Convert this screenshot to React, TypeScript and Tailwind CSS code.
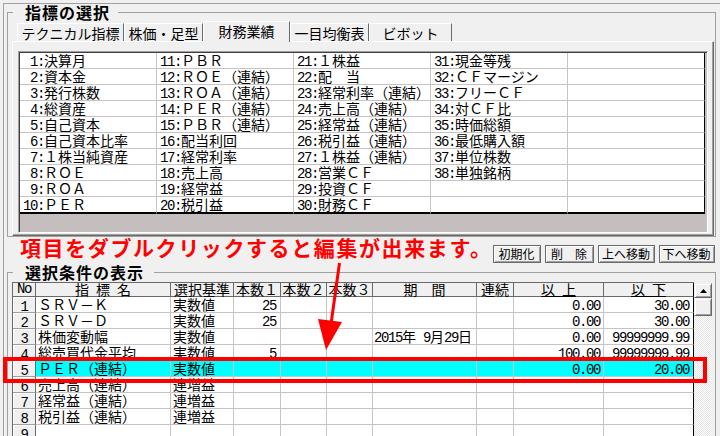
import React from "react";

const mono = "font-['Liberation_Mono',monospace] text-[14px] tracking-[-1.4px]";

const indicatorCols: string[][] = [
  ["決算月", "資本金", "発行株数", "総資産", "自己資本", "自己資本比率", "１株当純資産", "ＲＯＥ", "ＲＯＡ", "ＰＥＲ"],
  ["ＰＢＲ", "ＲＯＥ（連結）", "ＲＯＡ（連結）", "ＰＥＲ（連結）", "ＰＢＲ（連結）", "配当利回", "経常利率", "売上高", "経常益", "税引益"],
  ["１株益", "配　当", "経常利率（連結）", "売上高（連結）", "経常益（連結）", "税引益（連結）", "１株益（連結）", "営業ＣＦ", "投資ＣＦ", "財務ＣＦ"],
  ["現金等残", "ＣＦマージン", "フリーＣＦ", "対ＣＦ比", "時価総額", "最低購入額", "単位株数", "単独銘柄"],
  [],
];

type Cond = {
  no: number;
  name?: string;
  kind?: string;
  n1?: string;
  period?: boolean;
  lo?: string;
  hi?: string;
  sel?: boolean;
};

const conditions: Cond[] = [
  { no: 1, name: "ＳＲＶ－Ｋ", kind: "実数値", n1: "25", lo: "0.00", hi: "30.00" },
  { no: 2, name: "ＳＲＶ－Ｄ", kind: "実数値", n1: "25", lo: "0.00", hi: "30.00" },
  { no: 3, name: "株価変動幅", kind: "実数値", period: true, lo: "0.00", hi: "99999999.99" },
  { no: 4, name: "総売買代金平均", kind: "実数値", n1: "5", lo: "100.00", hi: "99999999.99" },
  { no: 5, name: "ＰＥＲ（連結）", kind: "実数値", lo: "0.00", hi: "20.00", sel: true },
  { no: 6, name: "売上高（連結）", kind: "連増益" },
  { no: 7, name: "経常益（連結）", kind: "連増益" },
  { no: 8, name: "税引益（連結）", kind: "連増益" },
  { no: 9 },
];

const Tab = ({ w, children }: { w: string; children: React.ReactNode }) => (
  <div
    className={`${w} h-[18px] border-t border-l border-r border-t-white border-l-white border-r-[#696969] flex items-center justify-center text-[14px] leading-[14px] whitespace-nowrap`}
  >
    {children}
  </div>
);

const IndicatorGrid = () => {
  const rows = Array.from({ length: 10 }, (_, r) => r);
  return (
    <div className="grid grid-cols-[repeat(5,137px)] w-[685px] bg-white">
      {rows.map((r) =>
        indicatorCols.map((col, c) => {
          const label = col[r];
          const n = c * 10 + r + 1;
          const last = r === 9;
          return (
            <div
              key={`${r}-${c}`}
              className={`${last ? "h-[17px] border-b-2 border-b-black" : "h-[16px] border-b border-b-[#c8c2c2]"} ${
                c === 4 ? "border-r border-r-black" : "border-r border-r-[#c8c2c2]"
              } pl-[3px] text-[14px] leading-[15px] whitespace-pre`}
            >
              {label && (
                <>
                  <span className={mono}>{String(n).padStart(2, " ")}:</span>
                  {label}
                </>
              )}
            </div>
          );
        })
      )}
    </div>
  );
};

const WinButton = ({ w, children }: { w: string; children: React.ReactNode }) => (
  <button
    className={`${w} h-[18px] bg-[#f0f0f0] border border-[#6a6a6a] shadow-[inset_1px_1px_0_#fff,inset_-1px_-1px_0_#a0a0a0] text-[12px] leading-[12px] whitespace-pre flex items-center justify-center`}
  >
    {children}
  </button>
);

const headCell = "h-[14px] bg-[#f0f0f0] border-r border-b border-r-[#696969] border-b-[#696969] flex items-center justify-center text-[14px] leading-[13px] whitespace-pre";

const CondRow = ({ r }: { r: Cond }) => {
  const bg = r.sel ? "bg-[#00ffff]" : "bg-white";
  const cell = `h-[16px] border-r border-b border-r-[#c8c2c2] border-b-[#c8c2c2] ${bg} text-[14px] leading-[15px] whitespace-pre`;
  return (
    <div className="flex">
      <div className="w-[23px] h-[16px] bg-[#f0f0f0] border-r border-b border-r-[#696969] border-b-[#a0a0a0] shadow-[inset_1px_1px_0_#fff] text-center leading-[15px]">
        <span className={mono}>{r.no}</span>
      </div>
      <div className={`w-[135px] pl-[2px] ${cell}`}>{r.name}</div>
      <div className={`w-[63px] pl-[2px] ${cell}`}>{r.kind}</div>
      <div className={`w-[47px] pr-[4px] text-right ${cell}`}>
        <span className={mono}>{r.n1}</span>
      </div>
      <div className={`w-[46px] ${cell}`} />
      <div className={`w-[46px] ${cell}`} />
      <div className={`w-[104px] pl-[1px] ${cell}`}>
        {r.period && (
          <>
            <span className={mono}>2015</span>年<span className={mono}> 9</span>月<span className={mono}>29</span>日
          </>
        )}
      </div>
      <div className={`w-[37px] ${cell}`} />
      <div className={`w-[90px] pr-[3px] text-right ${cell}`}>
        <span className={mono}>{r.lo}</span>
      </div>
      <div className={`w-[90px] pr-[4px] text-right ${cell} border-r-black`}>
        <span className={mono}>{r.hi}</span>
      </div>
    </div>
  );
};

export default function App() {
  return (
    <div className="relative w-[720px] h-[436px] overflow-hidden bg-[#f0f0f0] text-black font-['Noto_Sans_CJK_JP','Noto_Sans',sans-serif] pl-[3px] pt-[3px]">
      <div className="h-full border-l border-t border-[#a0a0a0]">
        {/* 指標の選択 */}
        <fieldset className="ml-[3px] w-[709px] h-[233px] border border-[#a0a0a0] pl-[4px] pr-[1px]">
          <legend className="ml-[1px] pl-[12px] pr-[8px] text-[16px] leading-[16px] font-bold tracking-[1px]">
            指標の選択
          </legend>
          <div className="flex items-end h-[21px] pl-[5px]">
            <Tab w="w-[107px]">テクニカル指標</Tab>
            <Tab w="w-[79px]">株価・足型</Tab>
            <div className="relative z-10 -mb-[1px] w-[87px] h-[21px] bg-[#f0f0f0] border-t border-l border-r border-t-white border-l-white border-r-[#696969] flex items-center justify-center pb-[2px] text-[14px] leading-[14px]">
              財務業績
            </div>
            <Tab w="w-[79px]">一目均衡表</Tab>
            <Tab w="w-[83px]">ビボット</Tab>
          </div>
          <div className="h-[195px] border border-t-white border-l-white border-r-[#696969] border-b-[#696969] shadow-[inset_-1px_-1px_0_#a0a0a0] pt-[9px] pl-[5px]">
            <div className="w-[690px] h-[182px] bg-[#c5bebe] border border-t-[#a0a0a0] border-l-[#a0a0a0] border-r-white border-b-white shadow-[inset_1px_1px_0_#404040] pl-[1px] pt-[1px]">
              <IndicatorGrid />
            </div>
          </div>
        </fieldset>

        <div className="flex h-[28px] pl-[16px] pr-[7px]">
          <p className="text-[21px] leading-[21px] font-bold tracking-[1.6px] text-[#ff0000] whitespace-nowrap">
            項目をダブルクリックすると編集が出来ます。
          </p>
          <div className="ml-auto self-end mb-[2px] flex gap-[4px]">
            <WinButton w="w-[48px]">初期化</WinButton>
            <WinButton w="w-[49px]">削　除</WinButton>
            <WinButton w="w-[57px]">上へ移動</WinButton>
            <WinButton w="w-[56px]">下へ移動</WinButton>
          </div>
        </div>

        {/* 選択条件の表示 */}
        <fieldset className="ml-[3px] w-[709px] h-[200px] border border-[#a0a0a0] pl-[4px]">
          <legend className="ml-[1px] pl-[12px] pr-[10px] text-[16px] leading-[14px] font-bold tracking-[1px]">
            選択条件の表示
          </legend>
          <div className="flex pt-[3px]">
            <div className="border-l border-t border-[#696969]">
              <div className="flex">
                <div className={`w-[23px] ${headCell}`}>
                  <span className={mono}>No</span>
                </div>
                <div className={`w-[135px] ${headCell}`}>{"指\u2002標\u2002名"}</div>
                <div className={`w-[63px] ${headCell}`}>選択基準</div>
                <div className={`w-[47px] ${headCell}`}>本数１</div>
                <div className={`w-[46px] ${headCell}`}>本数２</div>
                <div className={`w-[46px] ${headCell}`}>本数３</div>
                <div className={`w-[104px] ${headCell}`}>期　間</div>
                <div className={`w-[37px] ${headCell}`}>連続</div>
                <div className={`w-[90px] ${headCell}`}>
                  <span className="underline underline-offset-[1px]">{"以\u2002上"}</span>
                </div>
                <div className={`w-[90px] ${headCell} border-r-black`}>
                  <span className="underline underline-offset-[1px]">{"以\u2002下"}</span>
                </div>
              </div>
              {conditions.map((r) => (
                <CondRow key={r.no} r={r} />
              ))}
            </div>
            <div className="w-[18px] mt-[1px] flex flex-col">
              <div className="h-[15px] bg-[#f0f0f0] border border-t-[#f0f0f0] border-l-[#f0f0f0] border-r-[#696969] border-b-[#696969] shadow-[inset_1px_1px_0_#fff,inset_-1px_-1px_0_#a0a0a0] flex items-center justify-center">
                <svg width="7" height="4" viewBox="0 0 7 4">
                  <polygon points="0,4 3.5,0 7,4" fill="#000" />
                </svg>
              </div>
              <div className="h-[18px] bg-[#f0f0f0] border border-t-[#f0f0f0] border-l-[#f0f0f0] border-r-[#696969] border-b-[#696969] shadow-[inset_1px_1px_0_#fff,inset_-1px_-1px_0_#a0a0a0]" />
              <div className="flex-1 bg-[conic-gradient(#ffffff_25%,#e2e2e2_0_50%,#ffffff_0_75%,#e2e2e2_0)] bg-[length:2px_2px]" />
            </div>
          </div>
        </fieldset>
      </div>

      {/* highlight and arrow drawn over the table */}
      <div className="absolute left-[3px] top-[357px] w-[704px] h-[26px] border-4 border-[#ff0000]" />
      <svg className="absolute left-0 top-0 pointer-events-none" width="720" height="436">
        <line x1="339.5" y1="263" x2="331" y2="324" stroke="#ff0000" strokeWidth="3" />
        <polygon points="318,319 342,322 326,350" fill="#ff0000" />
      </svg>
    </div>
  );
}
